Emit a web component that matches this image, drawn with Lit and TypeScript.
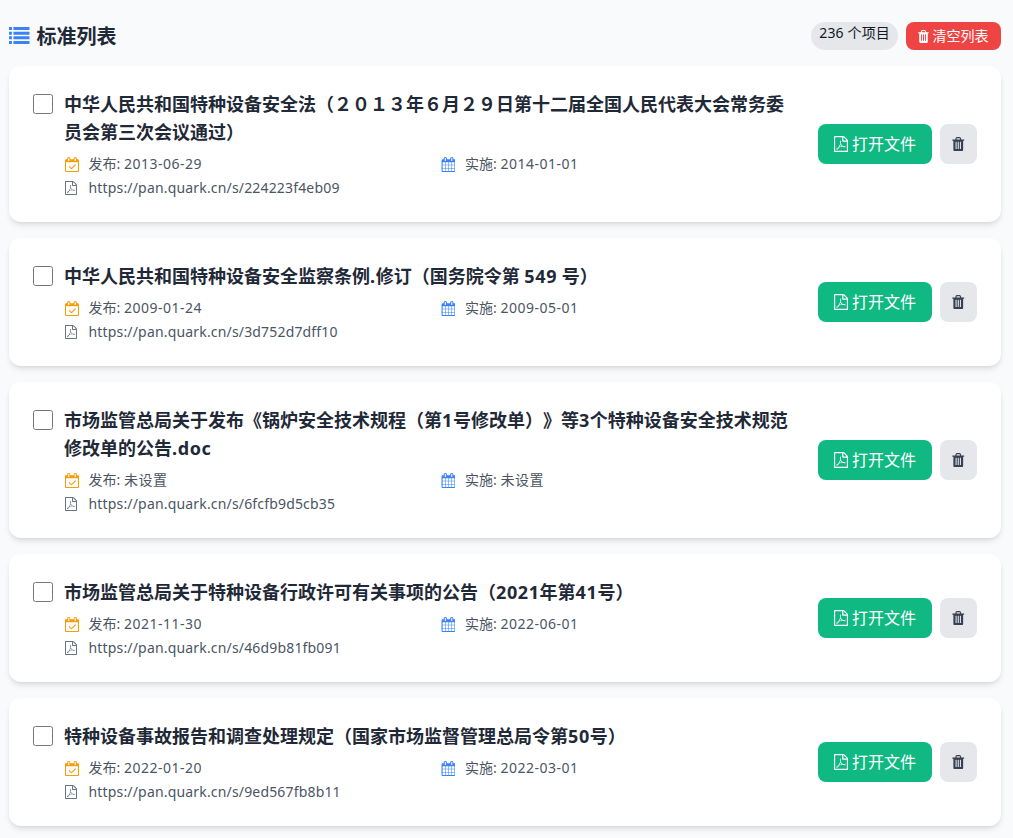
import { LitElement, html, css, svg } from "lit";
import { customElement } from "lit/decorators.js";

const ICONS = {
  list: ["0 128 1792 1408", "M256 1312v192q0 13-9.5 22.5t-22.5 9.5h-192q-13 0-22.5-9.5t-9.5-22.5v-192q0-13 9.5-22.5t22.5-9.5h192q13 0 22.5 9.5t9.5 22.5zm0-384v192q0 13-9.5 22.5t-22.5 9.5h-192q-13 0-22.5-9.5t-9.5-22.5v-192q0-13 9.5-22.5t22.5-9.5h192q13 0 22.5 9.5t9.5 22.5zm0-384v192q0 13-9.5 22.5t-22.5 9.5h-192q-13 0-22.5-9.5t-9.5-22.5v-192q0-13 9.5-22.5t22.5-9.5h192q13 0 22.5 9.5t9.5 22.5zm1536 768v192q0 13-9.5 22.5t-22.5 9.5h-1344q-13 0-22.5-9.5t-9.5-22.5v-192q0-13 9.5-22.5t22.5-9.5h1344q13 0 22.5 9.5t9.5 22.5zm-1536-1152v192q0 13-9.5 22.5t-22.5 9.5h-192q-13 0-22.5-9.5t-9.5-22.5v-192q0-13 9.5-22.5t22.5-9.5h192q13 0 22.5 9.5t9.5 22.5zm1536 768v192q0 13-9.5 22.5t-22.5 9.5h-1344q-13 0-22.5-9.5t-9.5-22.5v-192q0-13 9.5-22.5t22.5-9.5h1344q13 0 22.5 9.5t9.5 22.5zm0-384v192q0 13-9.5 22.5t-22.5 9.5h-1344q-13 0-22.5-9.5t-9.5-22.5v-192q0-13 9.5-22.5t22.5-9.5h1344q13 0 22.5 9.5t9.5 22.5zm0-384v192q0 13-9.5 22.5t-22.5 9.5h-1344q-13 0-22.5-9.5t-9.5-22.5v-192q0-13 9.5-22.5t22.5-9.5h1344q13 0 22.5 9.5t9.5 22.5z"],
  trash: ["160 128 1472 1536", "M704 1376v-704q0-14-9-23t-23-9h-64q-14 0-23 9t-9 23v704q0 14 9 23t23 9h64q14 0 23-9t9-23zm256 0v-704q0-14-9-23t-23-9h-64q-14 0-23 9t-9 23v704q0 14 9 23t23 9h64q14 0 23-9t9-23zm256 0v-704q0-14-9-23t-23-9h-64q-14 0-23 9t-9 23v704q0 14 9 23t23 9h64q14 0 23-9t9-23zm-544-992h448l-48-117q-7-9-17-11h-317q-10 2-17 11zm928 32v64q0 14-9 23t-23 9h-96v948q0 83-47 143.5t-113 60.5h-832q-66 0-113-58.5t-47-141.5v-952h-96q-14 0-23-9t-9-23v-64q0-14 9-23t23-9h309l70-167q15-37 54-63t79-26h320q40 0 79 26t54 63l70 167h309q14 0 23 9t9 23z"],
  pdf: ["128 0 1536 1792", "M1596 380q28 28 48 76t20 88v1152q0 40-28 68t-68 28h-1344q-40 0-68-28t-28-68v-1600q0-40 28-68t68-28h896q40 0 88 20t76 48zm-444-244v376h376q-10-29-22-41l-313-313q-12-12-41-22zm384 1528v-1024h-416q-40 0-68-28t-28-68v-416h-768v1536h1280zm-514-593q33 26 84 56 59-7 117-7 147 0 177 49 16 22 2 52 0 1-1 2l-2 2v1q-6 38-71 38-48 0-115-20t-130-53q-221 24-392 83-153 262-242 262-15 0-28-7l-24-12q-1-1-6-5-10-10-6-36 9-40 56-91.5t132-96.5q14-9 23 6 2 2 2 4 52-85 107-197 68-136 104-262-24-82-30.5-159.5t6.5-127.5q11-40 42-40h22q23 0 35 15 18 21 9 68-2 6-4 8 1 3 1 8v30q-2 123-14 192 55 164 146 238zm-576 411q52-24 137-158-51 40-87.5 84t-49.5 74zm398-920q-15 42-2 132 1-7 7-44 0-3 7-43 1-4 4-8-1-1-1-2-1-2-1-3-1-22-13-36 0 1-1 2v2zm-124 661q135-54 284-81-2-1-13-9.5t-16-13.5q-76-67-127-176-27 86-83 197-30 56-45 83zm646-16q-24-24-140-24 76 28 124 28 14 0 18-1 0-1-2-3z"],
  check: ["0 0 1664 1792", "M1303 964l-512 512q-10 9-23 9t-23-9l-288-288q-9-10-9-23t9-22l46-46q9-9 22-9t23 9l220 220 444-444q10-9 23-9t22 9l46 46q9 9 9 22t-9 23zm-1175 700h1408v-1024h-1408v1024zm384-1216v-288q0-14-9-23t-23-9h-64q-14 0-23 9t-9 23v288q0 14 9 23t23 9h64q14 0 23-9t9-23zm768 0v-288q0-14-9-23t-23-9h-64q-14 0-23 9t-9 23v288q0 14 9 23t23 9h64q14 0 23-9t9-23zm384-64v1280q0 52-38 90t-90 38h-1408q-52 0-90-38t-38-90v-1280q0-52 38-90t90-38h128v-96q0-66 47-113t113-47h64q66 0 113 47t47 113v96h384v-96q0-66 47-113t113-47h64q66 0 113 47t47 113v96h128q52 0 90 38t38 90z"],
  cal: ["0 0 1664 1792", "M192 1664h288v-288h-288v288zm352 0h320v-288h-320v288zm-352-352h288v-320h-288v320zm352 0h320v-320h-320v320zm-352-384h288v-288h-288v288zm736 736h320v-288h-320v288zm-384-736h320v-288h-320v288zm768 736h288v-288h-288v288zm-384-352h320v-320h-320v320zm-352-864v-288q0-13-9.5-22.5t-22.5-9.5h-64q-13 0-22.5 9.5t-9.5 22.5v288q0 13 9.5 22.5t22.5 9.5h64q13 0 22.5-9.5t9.5-22.5zm736 864h288v-320h-288v320zm-384-384h320v-288h-320v288zm384 0h288v-288h-288v288zm32-480v-288q0-13-9.5-22.5t-22.5-9.5h-64q-13 0-22.5 9.5t-9.5 22.5v288q0 13 9.5 22.5t22.5 9.5h64q13 0 22.5-9.5t9.5-22.5zm384-64v1280q0 52-38 90t-90 38h-1408q-52 0-90-38t-38-90v-1280q0-52 38-90t90-38h128v-96q0-66 47-113t113-47h64q66 0 113 47t47 113v96h384v-96q0-66 47-113t113-47h64q66 0 113 47t47 113v96h128q52 0 90 38t38 90z"],
} as const;

function icon(name: keyof typeof ICONS, cls: string) {
  const [vb, d] = ICONS[name];
  return html`<svg class=${cls} viewBox=${vb} preserveAspectRatio="none" aria-hidden="true">${svg`<path fill="currentColor" d=${d}></path>`}</svg>`;
}

/* Latin runs get their own span (wider setting); "|" marks where a CJK run crosses a line. */
function titleRuns(t: string) {
  return t
    .split(/([0-9A-Za-z.]+|\|)/)
    .filter((part) => part && part !== "|")
    .map((part) => html`<span class=${/^[0-9A-Za-z.]+$/.test(part) ? "lat" : "cjk"}>${part}</span>`);
}

const ITEMS = [
  { title: "中华人民共和国特种设备安全法（２０１３年６月２９日第十二届全国人民代表大会常务委员会第三次会议通过）", pub: "2013-06-29", eff: "2014-01-01", url: "https://pan.quark.cn/s/224223f4eb09" },
  { title: "中华人民共和国特种设备安全监察条例.修订（国务院令第 549 号）", pub: "2009-01-24", eff: "2009-05-01", url: "https://pan.quark.cn/s/3d752d7dff10" },
  { title: "市场监管总局关于发布《锅炉安全技术规程（第1号修改单）》等3个特种设备安全技术规范|修改单的公告.doc", pub: "未设置", eff: "未设置", url: "https://pan.quark.cn/s/6fcfb9d5cb35" },
  { title: "市场监管总局关于特种设备行政许可有关事项的公告（2021年第41号）", pub: "2021-11-30", eff: "2022-06-01", url: "https://pan.quark.cn/s/46d9b81fb091" },
  { title: "特种设备事故报告和调查处理规定（国家市场监督管理总局令第50号）", pub: "2022-01-20", eff: "2022-03-01", url: "https://pan.quark.cn/s/9ed567fb8b11" },
];

@customElement("app-root")
export class AppRoot extends LitElement {
  static styles = css`
    :host {
      display: block;
      min-height: 838px;
      box-sizing: border-box;
      background: #f9fafb;
      padding: 22px 12px 12px 9px;
      font-family: "Noto Sans", "Noto Sans CJK SC", sans-serif;
      color: #1f2937;
      text-spacing-trim: space-all;
    }
    * { box-sizing: border-box; }
    .head {
      display: flex;
      align-items: center;
      justify-content: space-between;
      height: 28px;
      margin-bottom: 16px;
    }
    .h-title {
      display: flex;
      align-items: center;
      gap: 7px;
      margin: 2px 0 0;
      font-size: 20px;
      line-height: 28px;
      font-weight: 700;
    }
    .i-list { width: 20.5px; height: 17px; color: #3b82f6; margin-bottom: 4px; }
    .h-tools { display: flex; align-items: center; gap: 8px; }
    .count {
      height: 28px;
      padding: 0 8px;
      border-radius: 14px;
      background: #e5e7eb;
      color: #111827;
      font-size: 14px;
      line-height: 22px;
      letter-spacing: 0.15px;
    }
    .clear {
      display: flex;
      align-items: center;
      gap: 4px;
      height: 28px;
      padding: 0 12.5px 0 11.5px;
      border: 0;
      border-radius: 8px;
      background: #ef4444;
      color: #fff;
      font: inherit;
      font-size: 14px;
      line-height: 20px;
    }
    .i-clear { width: 11px; height: 13px; }
    .list { display: flex; flex-direction: column; gap: 16px; }
    .card {
      display: flex;
      align-items: center;
      padding: 24px;
      background: #fff;
      border-radius: 12px;
      box-shadow: 0 4px 6px -1px rgba(0,0,0,.1), 0 2px 4px -2px rgba(0,0,0,.1);
    }
    .cb {
      flex: none;
      width: 20px;
      height: 20px;
      margin: 4px 12px 0 0;
      align-self: flex-start;
    }
    .body { flex: 1; min-width: 0; margin-right: 16px; }
    .title {
      margin: 0 1px 8px -1px;
      font-size: 18px;
      line-height: 28px;
      font-weight: 700;
      color: #1f2937;
    }
    .lat { letter-spacing: 0.6px; }
    .meta {
      display: grid;
      grid-template-columns: 1fr 1fr;
      gap: 4px 16px;
      font-size: 14px;
      line-height: 20px;
      color: #4b5563;
    }
    .cell { display: flex; align-items: center; white-space: pre; }
    .wide { grid-column: 1 / span 2; }
    .slot { width: 15.5px; margin-right: 8px; display: flex; }
    .i-m { flex: none; width: 14px; height: 15px; margin-left: -0.5px; }
    .i-pdf { flex: none; width: 12px; height: 14px; color: #6b7280; }
    .orange { color: #f59e0b; }
    .blue { color: #3b82f6; }
    .date { letter-spacing: 0.5px; }
    .url { letter-spacing: 0.17px; }
    .actions { display: flex; align-items: center; gap: 8px; flex: none; }
    .open {
      display: flex;
      align-items: center;
      gap: 4px;
      height: 40px;
      padding: 0 16px;
      border: 0;
      border-radius: 8px;
      background: #10b981;
      color: #fff;
      font: inherit;
      font-size: 16px;
    }
    .open span { margin-bottom: 2px; }
    .i-open { width: 14px; height: 16px; }
    .del {
      display: flex;
      align-items: center;
      justify-content: center;
      width: 37px;
      height: 40px;
      border: 0;
      border-radius: 8px;
      background: #e5e7eb;
      color: #374151;
      padding: 0;
    }
    .i-del { width: 12.5px; height: 14.5px; }
  `;

  render() {
    return html`
      <div class="head">
        <h2 class="h-title">${icon("list", "i-list")}标准列表</h2>
        <div class="h-tools">
          <span class="count">236 个项目</span>
          <button class="clear">${icon("trash", "i-clear")}清空列表</button>
        </div>
      </div>
      <div class="list">
        ${ITEMS.map(
          (it) => html`
            <div class="card">
              <input class="cb" type="checkbox" />
              <div class="body">
                <h3 class="title">${titleRuns(it.title)}</h3>
                <div class="meta">
                  <div class="cell"><span class="slot orange">${icon("check", "i-m")}</span>发布: <span class="date">${it.pub}</span></div>
                  <div class="cell"><span class="slot blue">${icon("cal", "i-m")}</span>实施: <span class="date">${it.eff}</span></div>
                  <div class="cell wide"><span class="slot">${icon("pdf", "i-pdf")}</span><span class="url">${it.url}</span></div>
                </div>
              </div>
              <div class="actions">
                <button class="open">${icon("pdf", "i-open")}<span>打开文件</span></button>
                <button class="del">${icon("trash", "i-del")}</button>
              </div>
            </div>
          `
        )}
      </div>
    `;
  }
}
